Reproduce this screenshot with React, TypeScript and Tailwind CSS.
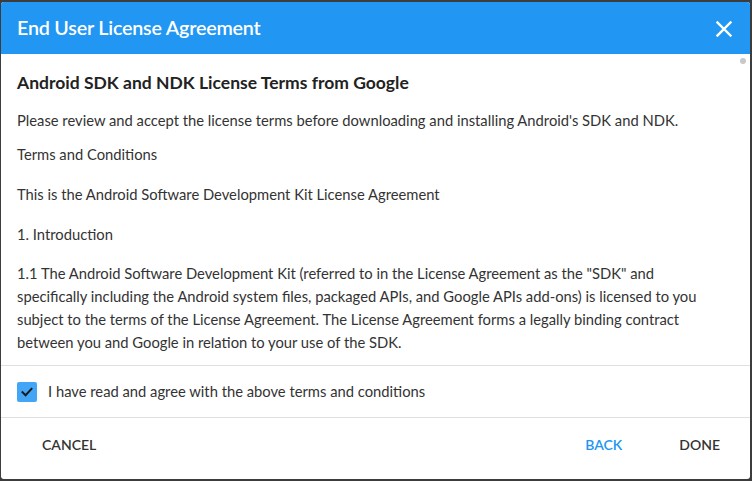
import React from "react";

export default function App() {
  const font = { fontFamily: "Lato, 'Noto Sans', sans-serif" };
  return (
    <div className="w-[752px] h-[481px] bg-[#3c3c3c] pt-[2px] pl-[1px] pr-[2px] pb-[2px] flex" style={font}>
      <div className="flex-1 flex flex-col bg-white rounded-[3px] overflow-hidden">
        <div className="h-[52px] bg-[#2196f3] flex items-center justify-between pl-[16px] pr-[18px] shrink-0">
          <div className="text-white text-[19.7px] font-semibold tracking-[-0.2px]">End User License Agreement</div>
          <svg width="16" height="16" viewBox="0 0 16 16" className="mt-[1px]">
            <path d="M1.5 1.5 L14.5 14.5 M14.5 1.5 L1.5 14.5" stroke="white" strokeWidth="2.4" strokeLinecap="square" />
          </svg>
        </div>
        <div className="relative flex-1 pl-[16px] pr-[30px] pt-[17px] text-[14.75px] leading-[23px] text-[#333333]">
          <div className="absolute right-[4px] top-[4px] w-[6px] h-[6px] rounded-full bg-[#c8c8c8]" />
          <div className="text-[17.5px] leading-[24px] font-bold text-[#222222] mb-[14px]">Android SDK and NDK License Terms from Google</div>
          <p className="mb-[11px]">Please review and accept the license terms before downloading and installing Android's SDK and NDK.</p>
          <p className="mb-[17px]">Terms and Conditions</p>
          <p className="mb-[17px]">This is the Android Software Development Kit License Agreement</p>
          <p className="mb-[16px]">1. Introduction</p>
          <p>1.1 The Android Software Development Kit (referred to in the License Agreement as the "SDK" and specifically including the Android system files, packaged APIs, and Google APIs add-ons) is licensed to you subject to the terms of the License Agreement. The License Agreement forms a legally binding contract between you and Google in relation to your use of the SDK.</p>
        </div>
        <div className="h-[53px] border-t border-b border-[#e0e0e0] flex items-center pl-[16px] shrink-0">
          <div className="w-[20px] h-[20px] rounded-[2px] bg-[#42a5f5] flex items-center justify-center">
            <svg width="14" height="14" viewBox="0 0 14 14">
              <path d="M2.5 7.2 L5.6 10.2 L11.5 3.8" stroke="#1b1b1b" strokeWidth="2" fill="none" strokeLinecap="square" />
            </svg>
          </div>
          <div className="ml-[11px] text-[14.75px] text-[#333333]">I have read and agree with the above terms and conditions</div>
        </div>
        <div className="h-[61px] flex items-start pt-[16px] shrink-0 text-[14px] font-semibold">
          <div className="ml-[41px] text-[#333333]">CANCEL</div>
          <div className="flex-1" />
          <div className="text-[#2196f3]">BACK</div>
          <div className="ml-[57px] mr-[30px] text-[#333333]">DONE</div>
        </div>
      </div>
    </div>
  );
}
